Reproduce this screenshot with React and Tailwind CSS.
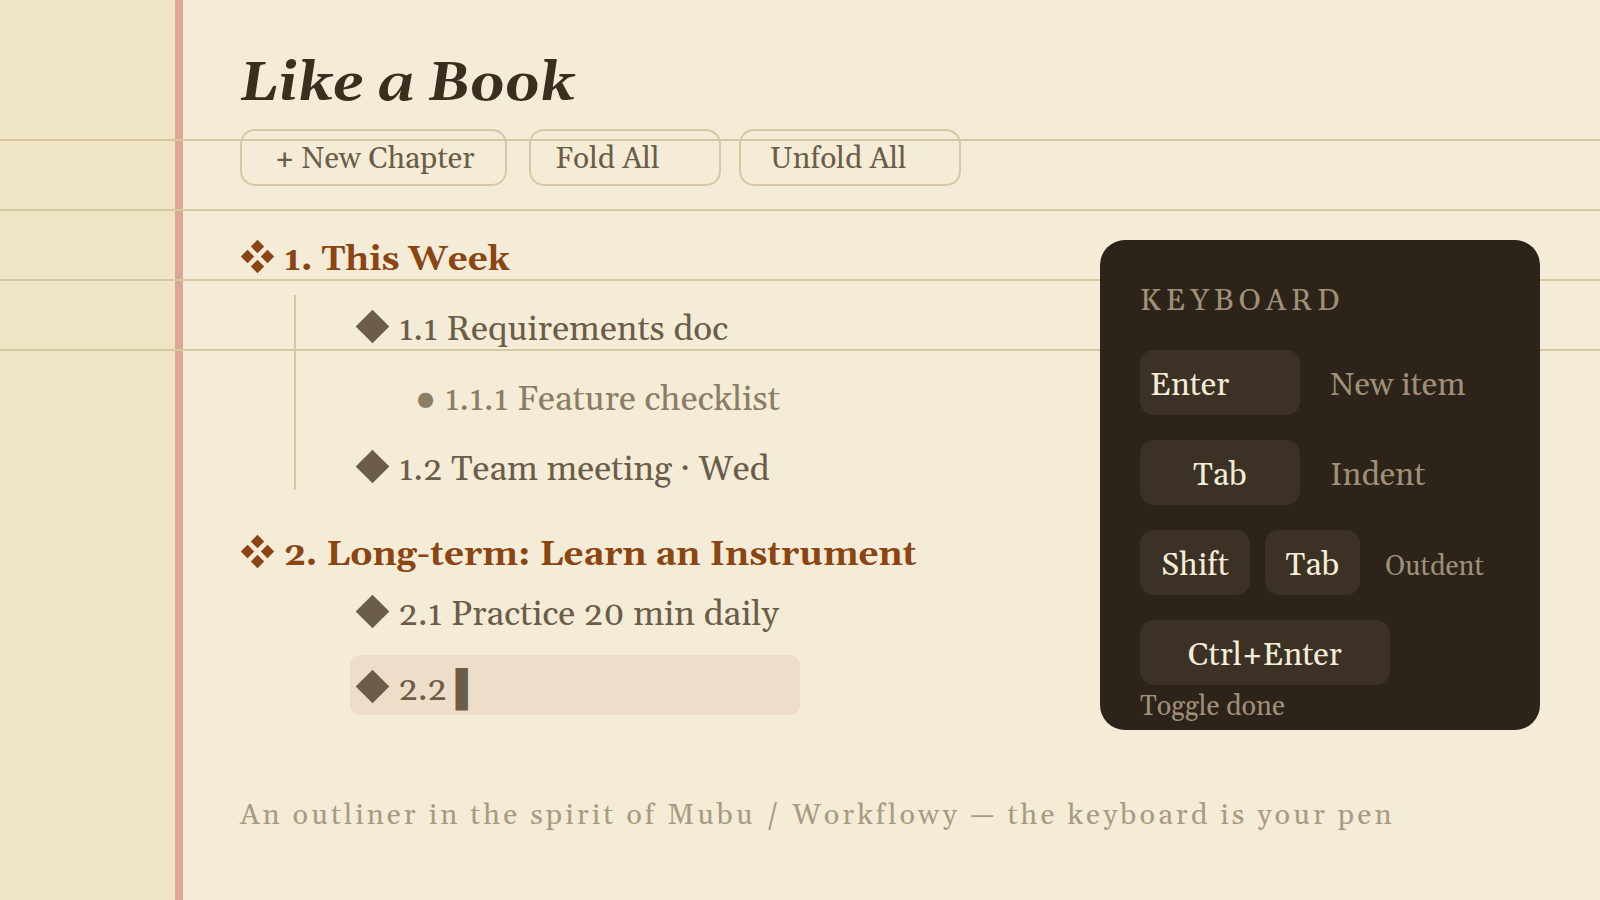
const toolbar = [
  { label: '+ New Chapter', className: 'w-[267px] mr-[22px] pl-[33px]' },
  { label: 'Fold All', className: 'w-[192px] mr-[18px] pl-[24px]' },
  { label: 'Unfold All', className: 'w-[222px] pl-[29px]' },
];

function Rules() {
  return (
    <div aria-hidden="true" className="pointer-events-none absolute inset-x-0 top-0">
      <div className="h-[141px] border-b-2 border-[#d5c8a3]" />
      <div className="h-[70px] border-b-2 border-[#d5c8a3]" />
      <div className="h-[70px] border-b-2 border-[#d5c8a3]" />
      <div className="h-[70px] border-b-2 border-[#d5c8a3]" />
    </div>
  );
}

function Diamond() {
  return (
    <svg aria-hidden="true" viewBox="0 0 35 35" fill="currentColor" className="inline-block size-[35px] align-[-4px]">
      <path d="M17.5 0.7 34.3 17.5 17.5 34.3 0.7 17.5Z" />
    </svg>
  );
}

function FourDiamonds() {
  return (
    <svg aria-hidden="true" viewBox="0 0 35 35" fill="currentColor" className="inline-block size-[35px] align-[-4px]">
      <path d="M17.5 0.8 24.2 7.5 17.5 14.2 10.8 7.5Z" />
      <path d="M17.5 20.8 24.2 27.5 17.5 34.2 10.8 27.5Z" />
      <path d="M7.5 10.8 14.2 17.5 7.5 24.2 0.8 17.5Z" />
      <path d="M27.5 10.8 34.2 17.5 27.5 24.2 20.8 17.5Z" />
    </svg>
  );
}

function Key({ className, children }) {
  return (
    <kbd className={`h-[65px] rounded-[14px] bg-[#3b3124] font-[Georgia,Gelasio,'Liberation_Serif',serif] text-[32px] leading-[72px] text-[#f5ecd7] ${className}`}>
      {children}
    </kbd>
  );
}

function KeyboardCard() {
  return (
    <section aria-label="Keyboard" className="mt-[31px] mr-[60px] h-[490px] w-[440px] shrink-0 rounded-[25px] bg-[#2c2419] pt-[41px] pl-10 text-[#a09078]">
      <h2 className="text-[30px] leading-[40px] tracking-[5px]">KEYBOARD</h2>
      <div className="mt-[29px] flex flex-col gap-[25px]">
        <div className="flex gap-[30px]">
          <Key className="w-[160px] pl-[10px]">Enter</Key>
          <span className="h-[65px] text-[32px] leading-[72px]">New item</span>
        </div>
        <div className="flex gap-[30px]">
          <Key className="w-[160px] text-center">Tab</Key>
          <span className="h-[65px] text-[32px] leading-[72px]">Indent</span>
        </div>
        <div className="flex">
          <Key className="mr-[15px] w-[110px] text-center">Shift</Key>
          <Key className="mr-[25px] w-[95px] text-center">Tab</Key>
          <span className="h-[65px] text-[27px] leading-[74px]">Outdent</span>
        </div>
        <div className="flex flex-col">
          <Key className="w-[250px] text-center">Ctrl+Enter</Key>
          <span className="text-[27px] leading-[44px]">Toggle done</span>
        </div>
      </div>
    </section>
  );
}

export default function App() {
  return (
    <div className="relative flex min-h-screen bg-[#f5ecd7] font-[Georgia,Gelasio,'Liberation_Serif',serif] text-[#6b5d48]">
      <aside className="w-[183px] shrink-0 border-r-8 border-[#dba897] bg-[#efe4c5]" />
      <Rules />
      <main className="relative flex-1 pl-[57px]">
        <h1 className="pt-[49px] text-[55px] leading-[70px] font-bold text-[#3a2f1f] italic">Like a Book</h1>
        <div className="mt-[10px] flex">
          {toolbar.map((b) => (
            <button key={b.label} type="button" className={`h-[57px] rounded-[15px] border-2 border-[#d5c8a3] text-left text-[30px] leading-[53px] pt-[2px] ${b.className}`}>
              {b.label}
            </button>
          ))}
        </div>
        <div className="mt-[23px] flex justify-between">
          <div className="mt-[21px] text-[35px] leading-[60px] whitespace-nowrap">
            <h2 className="font-bold text-[#8b4513]"><FourDiamonds /> 1. This Week</h2>
            <div className="mt-[10px] ml-[54px] flex">
              <div className="-mt-[5px] mb-[10px] w-[2px] shrink-0 bg-[#d5c8a3]" />
              <ul className="flex flex-col gap-[10px] pl-[59px]">
                <li><Diamond /> 1.1 Requirements doc</li>
                <li className="pl-[60px] text-[#8b7d66]">● 1.1.1 Feature checklist</li>
                <li><Diamond /> 1.2 Team meeting · Wed</li>
              </ul>
            </div>
            <h2 className="mt-[25px] font-bold text-[#8b4513]"><FourDiamonds /> 2. Long-term: Learn an Instrument</h2>
            <ul className="ml-[110px]">
              <li className="pl-[5px]"><Diamond /> 2.1 Practice 20 min daily</li>
              <li className="mt-[10px] h-[60px] w-[450px] rounded-[10px] bg-[#eddeca] pl-[5px] leading-[70px]"><Diamond /> 2.2 ▌</li>
            </ul>
          </div>
          <KeyboardCard />
        </div>
        <p className="mt-[66px] text-[29px] leading-[40px] tracking-[3px] text-[#a89b84]">
          An outliner in the spirit of Mubu / Workflowy — the keyboard is your pen
        </p>
      </main>
    </div>
  );
}
